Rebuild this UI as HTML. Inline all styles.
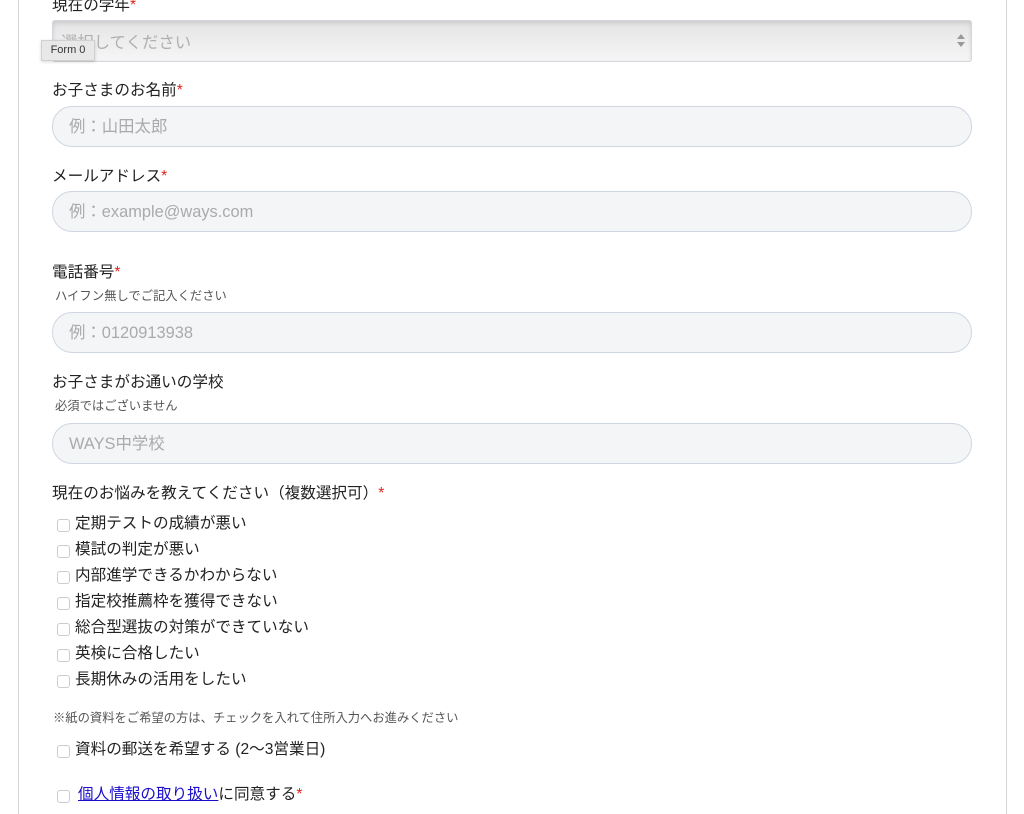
<!DOCTYPE html>
<html><head><meta charset="utf-8"><style>
body{margin:0;width:1024px;height:814px;background:#fff;position:relative;overflow:hidden;font-family:"Liberation Sans","Noto Sans CJK JP",sans-serif;color:#222}
.bl{position:absolute;left:18px;top:0;width:1px;height:814px;background:#d6d6d6}
.br{position:absolute;left:1006px;top:0;width:1px;height:814px;background:#d6d6d6}
.lab{position:absolute;left:52px;font-size:15.6px;line-height:20px;white-space:nowrap}
.lab b{color:#e0241b;font-weight:normal}
.sub{position:absolute;left:55px;font-size:12.3px;line-height:16px;color:#555;white-space:nowrap}
.in{position:absolute;left:52px;width:918px;height:39px;border:1px solid #cfd6e2;border-radius:20px;background:#f4f5f7;box-sizing:content-box}
.in span{position:absolute;left:16px;top:10px;font-size:16.4px;line-height:20px;color:#aaa;white-space:nowrap}
.sel{position:absolute;left:52px;top:20px;width:918px;height:40px;border:1px solid #d3d6dc;border-radius:3px;background:linear-gradient(#e4e4e4,#f6f6f6);box-shadow:inset 0 2px 4px rgba(0,0,0,.12)}
.sel span{position:absolute;left:8px;top:8px;font-size:16.4px;color:#b0b0b0}
.tip{position:absolute;left:41px;top:40px;width:52px;height:19px;background:#e8e8e8;border:1px solid #d0d0d0;font-size:11px;line-height:19px;text-align:center;color:#333;box-shadow:0 1px 3px rgba(0,0,0,.15)}
.cb{position:absolute;left:57px;font-size:15.6px;line-height:20px;white-space:nowrap;padding-left:18px}
.cb:before{content:"";position:absolute;left:0;top:5px;width:11px;height:11px;border:1px solid #ccc;border-radius:3px;background:#fff}
a{color:#1a0dcc}
</style></head><body>
<div class="bl"></div><div class="br"></div>
<div class="lab" style="top:-4px">現在の学年<b>*</b></div>
<div class="sel"><span>選択してください</span>
<div style="position:absolute;right:6px;top:13px;width:0;height:0;border-left:4px solid transparent;border-right:4px solid transparent;border-bottom:5px solid #999"></div>
<div style="position:absolute;right:6px;top:21px;width:0;height:0;border-left:4px solid transparent;border-right:4px solid transparent;border-top:5px solid #999"></div></div>
<div class="tip">Form 0</div>
<div class="lab" style="top:81px">お子さまのお名前<b>*</b></div>
<div class="in" style="top:106px"><span>例：山田太郎</span></div>
<div class="lab" style="top:167px">メールアドレス<b>*</b></div>
<div class="in" style="top:191px"><span>例：example@ways.com</span></div>
<div class="lab" style="top:263px">電話番号<b>*</b></div>
<div class="sub" style="top:288px">ハイフン無しでご記入ください</div>
<div class="in" style="top:312px"><span>例：0120913938</span></div>
<div class="lab" style="top:373px">お子さまがお通いの学校</div>
<div class="sub" style="top:398px">必須ではございません</div>
<div class="in" style="top:423px"><span>WAYS中学校</span></div>
<div class="lab" style="top:484px">現在のお悩みを教えてください（複数選択可）<b>*</b></div>
<div class="cb" style="top:514px">定期テストの成績が悪い</div>
<div class="cb" style="top:540px">模試の判定が悪い</div>
<div class="cb" style="top:566px">内部進学できるかわからない</div>
<div class="cb" style="top:592px">指定校推薦枠を獲得できない</div>
<div class="cb" style="top:618px">総合型選抜の対策ができていない</div>
<div class="cb" style="top:644px">英検に合格したい</div>
<div class="cb" style="top:670px">長期休みの活用をしたい</div>
<div class="sub" style="top:710px;left:53px">※紙の資料をご希望の方は、チェックを入れて住所入力へお進みください</div>
<div class="cb" style="top:740px">資料の郵送を希望する (2〜3営業日)</div>
<div class="cb" style="top:785px;padding-left:21px"><a href="#">個人情報の取り扱い</a>に同意する<b style="color:#e0241b;font-weight:normal">*</b></div>
</body></html>
